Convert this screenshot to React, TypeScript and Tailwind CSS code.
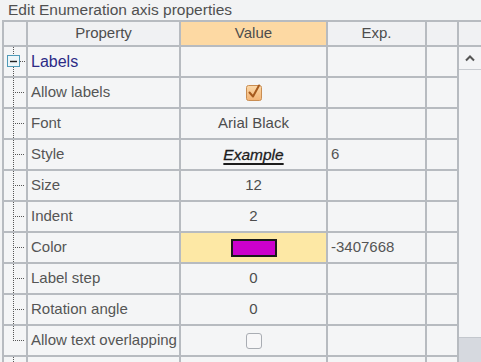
import type { ReactNode } from "react";

type Row = {
  name: string;
  value?: ReactNode;
  exp?: string;
  group?: boolean;
  highlight?: boolean;
  last?: boolean;
};

function Checked() {
  return (
    <svg width="16" height="17" viewBox="0 0 16 17" className="block">
      <defs>
        <linearGradient id="cb" x1="0" y1="0" x2="0" y2="1">
          <stop offset="0" stopColor="#fbd9aa" />
          <stop offset="1" stopColor="#f3b374" />
        </linearGradient>
      </defs>
      <rect x="0.5" y="1.5" width="15" height="15" rx="2" fill="url(#cb)" stroke="#c98d52" />
      <path d="M3.5 8.5 L7 12.5 L13 1.5" fill="none" stroke="#a65a1e" strokeWidth="2" strokeLinecap="round" strokeLinejoin="round" />
    </svg>
  );
}

function Unchecked() {
  return <div className="h-[16px] w-[16px] rounded-[3px] border border-[#a9adb3] bg-[#f7f7f8]" />;
}

function Swatch() {
  return <div className="h-[18px] w-[46px] border-2 border-[#1a1a1a] bg-[#cc00cc]" />;
}

function Example() {
  return (
    <span className="text-[15.5px] italic text-[#1c1c1c] underline decoration-2 underline-offset-[3px] [-webkit-text-stroke:0.3px_#1c1c1c]">
      Example
    </span>
  );
}

const rows: Row[] = [
  { name: "Labels", group: true },
  { name: "Allow labels", value: <Checked /> },
  { name: "Font", value: "Arial Black" },
  { name: "Style", value: <Example />, exp: "6" },
  { name: "Size", value: "12" },
  { name: "Indent", value: "2" },
  { name: "Color", value: <Swatch />, exp: "-3407668", highlight: true },
  { name: "Label step", value: "0" },
  { name: "Rotation angle", value: "0" },
  { name: "Allow text overlapping", value: <Unchecked />, last: true },
];

function Tree({ group, last }: { group?: boolean; last?: boolean }) {
  const dots = { stroke: "#555", strokeDasharray: "1 1" };
  if (group) {
    return (
      <svg width="22" height="29" className="block">
        <line x1="9.5" y1="0" x2="9.5" y2="8" {...dots} />
        <line x1="9.5" y1="20" x2="9.5" y2="29" {...dots} />
        <line x1="16" y1="14.5" x2="21" y2="14.5" {...dots} />
        <rect x="3.5" y="8.5" width="12" height="11" fill="#eef6f9" stroke="#4f9ab8" />
        <line x1="6" y1="14.5" x2="13" y2="14.5" stroke="#222" strokeWidth="1.4" />
      </svg>
    );
  }
  return (
    <svg width="22" height="29" className="block">
      <line x1="9.5" y1="0" x2="9.5" y2={last ? 15 : 29} {...dots} />
      <line x1="11" y1="14.5" x2="21" y2="14.5" {...dots} />
    </svg>
  );
}

export default function App() {
  return (
    <div className="h-[362px] w-[481px] overflow-hidden bg-[#f2f3f4] font-['Liberation_Sans',Arial,sans-serif] text-[15px] text-[#4d4d4d]">
      <div className="flex h-[20px] items-center pl-[8px] text-[15.5px] leading-none text-[#505050]">
        Edit Enumeration axis properties
      </div>

      <div className="ml-[2px] grid grid-cols-[22px_151px_145px_97px_30px_22px] grid-rows-[23px] auto-rows-[29px] gap-[2px] bg-[#b7bbc0] pl-[2px] pt-[2px]">
        {/* Header */}
        <div className="bg-[#f0f1f3]" />
        <div className="flex items-center justify-center bg-[#f0f1f3]">Property</div>
        <div className="flex items-center justify-center bg-[#fdd9a3]">Value</div>
        <div className="flex items-center justify-center bg-[#f0f1f3]">Exp.</div>
        <div className="bg-[#f0f1f3]" />
        <div className="bg-[#f0f1f3]" />

        {rows.map((r, i) => (
          <Cells key={i} row={r} rowIndex={i} />
        ))}

        {/* partial row at the bottom */}
        <div className="col-start-1 bg-[#f4f5f6]">
          <svg width="22" height="29" className="block">
            <line x1="9.5" y1="0" x2="9.5" y2="29" stroke="#555" strokeDasharray="1 1" />
          </svg>
        </div>
        <div className="bg-[#f4f5f6]" />
        <div className="bg-[#f4f5f6]" />
        <div className="bg-[#f4f5f6]" />
        <div className="bg-[#f4f5f6]" />

        {/* Scrollbar */}
        <div className="col-start-6 row-start-2 row-span-11 flex flex-col bg-[#f3f4f6]">
          <div className="flex h-[23px] items-center justify-center border-b border-[#c9ccd1] bg-[#f3f4f6]">
            <svg width="12" height="8" viewBox="0 0 12 8">
              <path d="M2 6.5 L6 2.5 L10 6.5" fill="none" stroke="#555" strokeWidth="2" />
            </svg>
          </div>
          <div className="h-[267px] bg-[#f3f4f6]" />
          <div className="flex-1 border-t border-[#c3c7cd] bg-[#d6d9df]" />
        </div>
      </div>
    </div>
  );
}

function Cells({ row, rowIndex }: { row: Row; rowIndex: number }) {
  const rowStart = ["row-start-2", "row-start-3", "row-start-4", "row-start-5", "row-start-6", "row-start-7", "row-start-8", "row-start-9", "row-start-10", "row-start-11"][rowIndex];
  return (
    <>
      <div className={"col-start-1 bg-[#f4f5f6] " + rowStart}>
        <Tree group={row.group} last={row.last} />
      </div>
      <div
        className={
          "flex items-center bg-[#f4f5f6] pl-[3px] " +
          (row.group ? "text-[16px] text-[#2c2a86]" : "text-[#555]")
        }
      >
        {row.name}
      </div>
      <div
        className={
          "flex items-center justify-center " +
          (row.highlight ? "bg-[#fde8a5]" : "bg-[#f4f5f6]")
        }
      >
        {row.value}
      </div>
      <div className="flex items-center bg-[#f4f5f6] pl-[3px] text-[#555]">{row.exp}</div>
      <div className="bg-[#f4f5f6]" />
    </>
  );
}
